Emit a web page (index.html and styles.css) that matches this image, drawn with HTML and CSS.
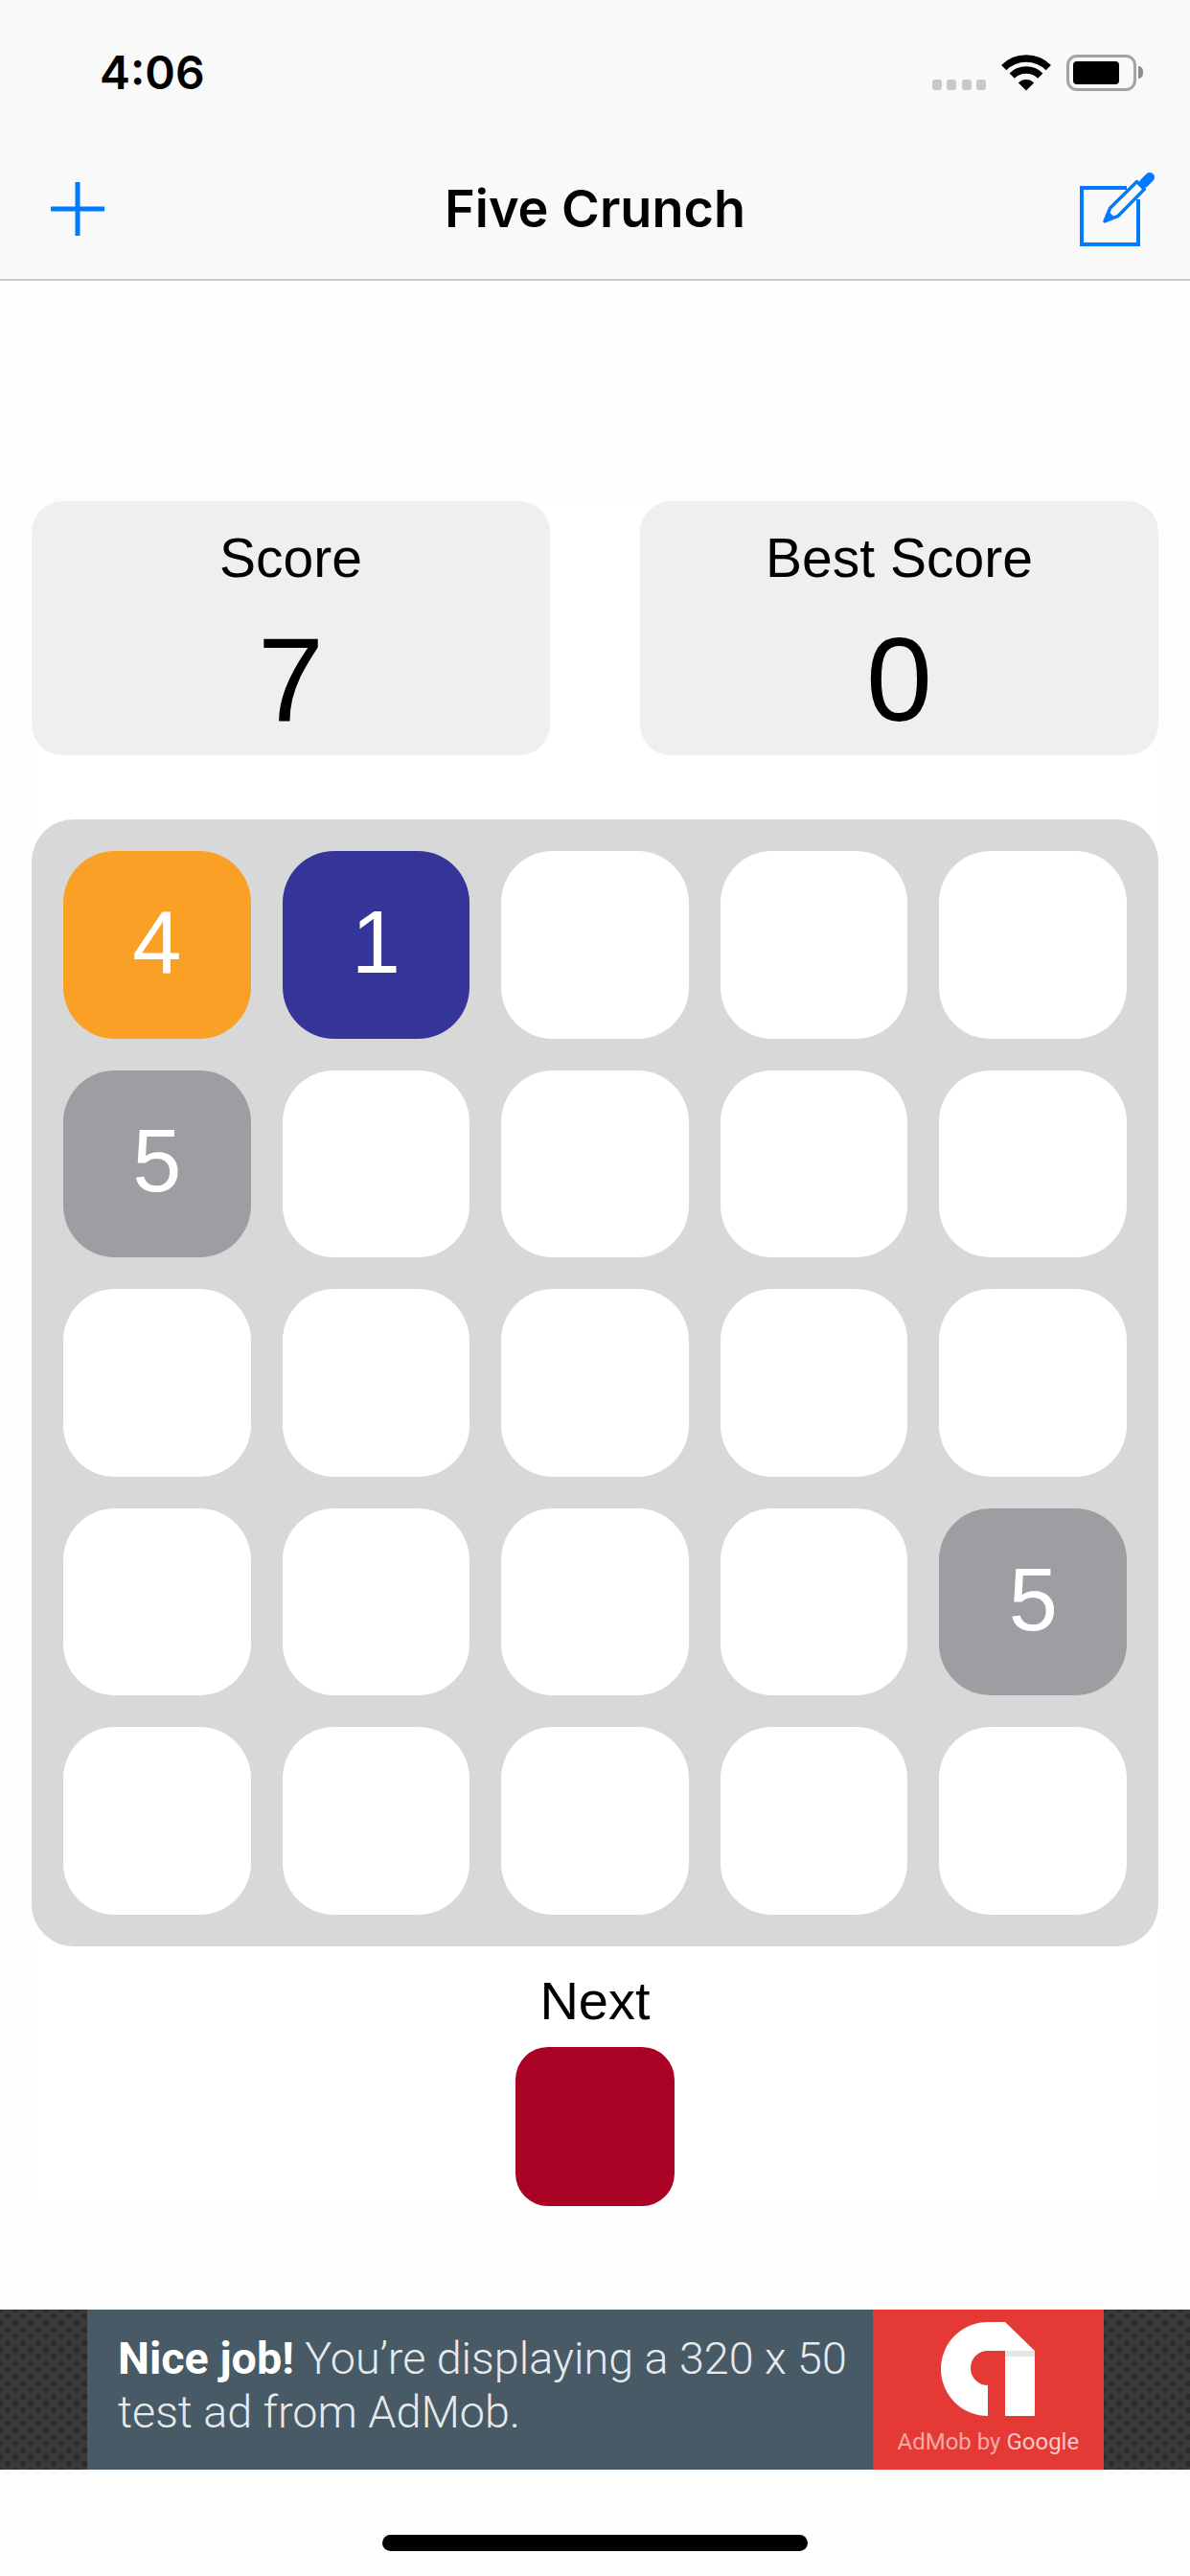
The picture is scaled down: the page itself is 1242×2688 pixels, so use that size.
FILE: index.html
```html
<!DOCTYPE html>
<html lang="en">
<head>
  <meta charset="UTF-8">
  <meta name="viewport" content="width=device-width, initial-scale=1.0">
  <title>Five Crunch</title>
  <link rel="stylesheet" href="styles.css">
</head>
<body>

  <header class="top-bar">
    <div class="status-bar">
      <span class="time">4:06</span>
      <div class="status-icons">
        <div class="signal"><i></i><i></i><i></i><i></i></div>
        <svg class="wifi" width="52" height="38" viewBox="0 0 52 38">
          <path d="M2.7 13.7A33 33 0 0 1 49.3 13.7" fill="none" stroke="#000" stroke-width="7.5"/>
          <path d="M11.2 22.2A21 21 0 0 1 40.8 22.2" fill="none" stroke="#000" stroke-width="7.5"/>
          <path d="M26 37.5L17.9 29.4A11.5 11.5 0 0 1 34.1 29.4Z" fill="#000"/>
        </svg>
        <div class="battery"><div class="battery-level"></div></div>
        <div class="battery-tip"></div>
      </div>
    </div>
    <nav class="nav-bar">
      <svg class="nav-plus" width="58" height="58" viewBox="0 0 58 58">
        <path d="M29 1V57M1 29H57" fill="none" stroke="#007aff" stroke-width="5"/>
      </svg>
      <h1 class="nav-title">Five Crunch</h1>
      <svg class="nav-compose" width="85" height="85" viewBox="0 0 85 85">
        <path d="M55 20H8V79H67V32" fill="none" stroke="#007aff" stroke-width="4"/>
        <path d="M32 55L37.7 40.9L65.6 13.6L73.4 21.4L46.1 49.3Z" fill="none" stroke="#007aff" stroke-width="3.5" stroke-linejoin="round"/>
        <path d="M32 55L36 44.5L42.5 51Z" fill="#007aff"/>
        <path d="M73 15L79 9" fill="none" stroke="#007aff" stroke-width="10" stroke-linecap="round"/>
      </svg>
    </nav>
  </header>

  <main class="game">
    <section class="scores">
      <div class="score-card">
        <div class="score-label">Score</div>
        <div class="score-value">7</div>
      </div>
      <div class="score-card">
        <div class="score-label">Best Score</div>
        <div class="score-value">0</div>
      </div>
    </section>

    <section class="board">
      <div class="tile orange">4</div>
      <div class="tile navy">1</div>
      <div class="tile"></div>
      <div class="tile"></div>
      <div class="tile"></div>

      <div class="tile gray">5</div>
      <div class="tile"></div>
      <div class="tile"></div>
      <div class="tile"></div>
      <div class="tile"></div>

      <div class="tile"></div>
      <div class="tile"></div>
      <div class="tile"></div>
      <div class="tile"></div>
      <div class="tile"></div>

      <div class="tile"></div>
      <div class="tile"></div>
      <div class="tile"></div>
      <div class="tile"></div>
      <div class="tile gray">5</div>

      <div class="tile"></div>
      <div class="tile"></div>
      <div class="tile"></div>
      <div class="tile"></div>
      <div class="tile"></div>
    </section>

    <section class="next">
      <div class="next-label">Next</div>
      <div class="next-tile"></div>
    </section>
  </main>

  <aside class="ad">
    <div class="ad-body">
      <p class="ad-text"><b>Nice job!</b> You’re displaying a 320 x 50 test ad from AdMob.</p>
      <div class="ad-brand">
        <svg class="ad-logo" width="100" height="100" viewBox="0 0 100 100">
          <path d="M50 2H68L99 32V100H68V32H50A18 18 0 0 0 50 68V100A49 49 0 0 1 50 2Z" fill="#fff"/>
          <path d="M68 32H99V38H68Z" fill="#e3e5e6"/>
        </svg>
        <div class="ad-by">AdMob by <span>Google</span></div>
      </div>
    </div>
  </aside>

  <div class="home-bar"></div>

</body>
</html>
```

FILE: styles.css
```css
body {
  margin: 0;
  width: 1242px;
  height: 2688px;
  overflow: hidden;
  background-color: #fdfdfd;
  font-family: "Liberation Sans", Arial, sans-serif;
  color: #000;
}

/* top bars */
.top-bar {
  background: #f9f9f9;
  border-bottom: 2px solid #c9c9c9;
}

.status-bar {
  height: 144px;
  padding: 0 49px 0 104px;
  display: flex;
  justify-content: space-between;
  align-items: flex-start;
}

.time {
  margin-top: 46px;
  font-family: Inter, sans-serif;
  font-size: 48px;
  line-height: 60px;
  font-weight: 600;
}

.status-icons {
  margin-top: 57px;
  display: flex;
  align-items: flex-start;
}

.signal {
  margin: 26px 16px 0 0;
  display: flex;
  gap: 5.5px;
}

.signal i {
  width: 10px;
  height: 11px;
  border-radius: 3px;
  background: #c8c8c8;
}

.wifi {
  margin-right: 16px;
}

.battery {
  width: 73px;
  height: 38px;
  box-sizing: border-box;
  padding: 4px;
  border: 3px solid #a3a3a3;
  border-radius: 11px;
}

.battery-level {
  width: 48px;
  height: 24px;
  background: #000;
  border-radius: 4px;
}

.battery-tip {
  width: 5px;
  height: 13px;
  margin: 12px 0 0 2px;
  background: #8e8e8e;
  border-radius: 0 6px 6px 0;
}

.nav-bar {
  height: 147px;
  padding: 0 36px 0 52px;
  display: flex;
  justify-content: space-between;
  align-items: center;
  position: relative;
}

.nav-title {
  position: absolute;
  left: 0;
  right: 0;
  margin: 0;
  text-align: center;
  font-family: Inter, sans-serif;
  font-size: 54px;
  font-weight: 600;
}

.nav-compose {
  margin-top: 2px;
}

/* game */
.game {
  width: 1176px;
  margin: 230px auto 0;
  background: #fff;
}

.scores {
  display: flex;
  justify-content: space-between;
}

.score-card {
  width: 541px;
  height: 265px;
  box-sizing: border-box;
  padding-top: 29px;
  background: #efefef;
  border-radius: 32px;
  text-align: center;
}

.score-label {
  font-size: 57px;
  line-height: 60px;
}

.score-value {
  margin-top: 32px;
  font-size: 124px;
  line-height: 130px;
}

.board {
  margin-top: 67px;
  padding: 33px;
  background: #d8d8d8;
  border-radius: 44px;
  display: grid;
  grid-template-columns: repeat(5, 1fr);
  gap: 33px;
}

.tile {
  aspect-ratio: 1;
  box-sizing: border-box;
  padding-bottom: 5px;
  background: #fff;
  border-radius: 54px;
  display: flex;
  justify-content: center;
  align-items: center;
  color: #fff;
  font-size: 92px;
}

.tile.orange {
  background: #faa027;
}

.tile.navy {
  background: #343499;
}

.tile.gray {
  background: #9e9da2;
}

.next {
  padding-top: 27px;
  display: flex;
  flex-direction: column;
  align-items: center;
}

.next-label {
  font-size: 56px;
  line-height: 60px;
}

.next-tile {
  width: 166px;
  height: 166px;
  margin-top: 18px;
  background: #aa0224;
  border-radius: 34px;
}

/* ad banner */
.ad {
  margin-top: 108px;
  height: 167px;
  padding: 0 90px 0 91px;
  background-color: #3a3a3a;
  background-image:
    radial-gradient(circle, #2c2c2c 3px, transparent 3.5px),
    radial-gradient(circle, #2c2c2c 3px, transparent 3.5px);
  background-size: 16px 14px;
  background-position: 0 0, 8px 7px;
}

.ad-body {
  height: 100%;
  background: #485a65;
  display: flex;
  justify-content: space-between;
}

.ad-text {
  width: 790px;
  margin: 0;
  padding: 23px 0 0 32px;
  font-family: Roboto, sans-serif;
  font-size: 46.7px;
  font-weight: 300;
  line-height: 56px;
  color: #e6eaec;
}

.ad-text b {
  font-weight: 700;
  color: #fff;
}

.ad-brand {
  width: 242px;
  padding-top: 11px;
  box-sizing: border-box;
  background: #e53935;
  display: flex;
  flex-direction: column;
  align-items: center;
}

.ad-by {
  margin-top: 12px;
  font-family: Roboto, sans-serif;
  font-size: 24px;
  line-height: 30px;
  color: #f5a9a6;
}

.ad-by span {
  color: #f9c8c6;
}

.home-bar {
  width: 444px;
  height: 17px;
  margin: 68px auto 0;
  background: #000;
  border-radius: 9px;
}
```
